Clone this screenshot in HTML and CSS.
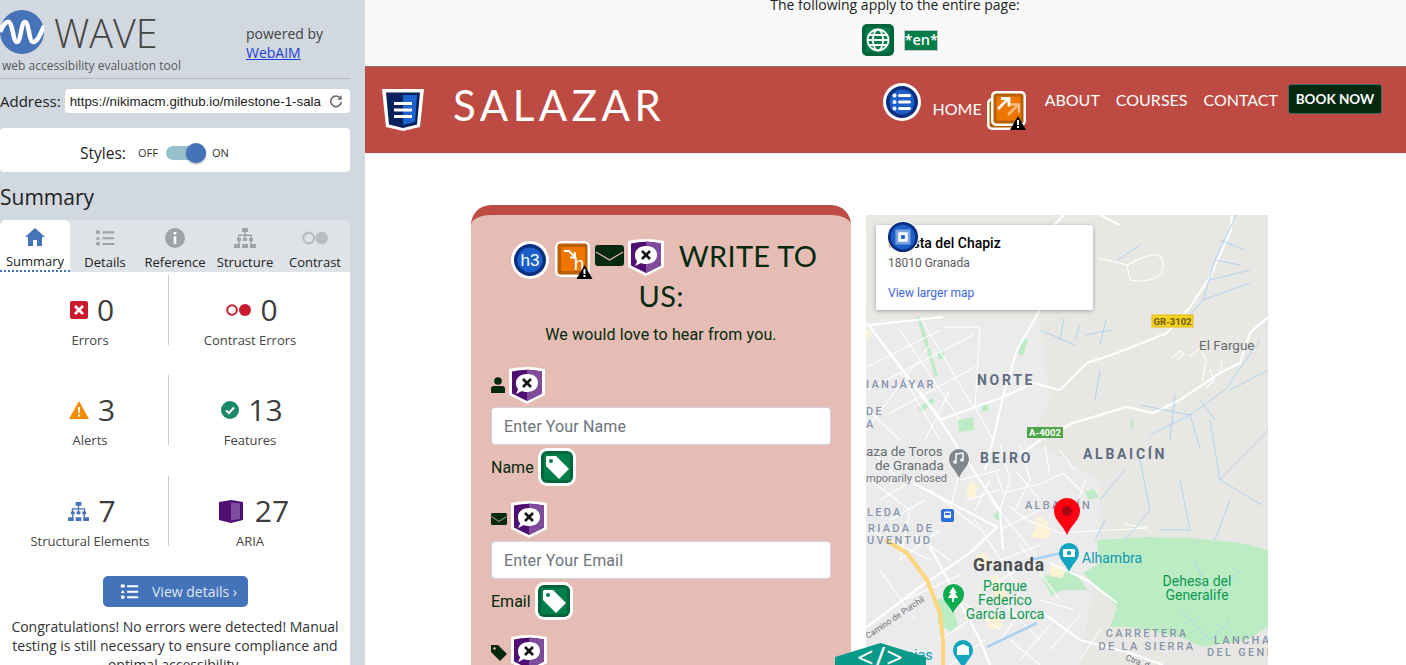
FILE: index.html
```html
<!DOCTYPE html>
<html lang="en">
<head>
    <meta charset="UTF-8">
    <title>WAVE - Salazar</title>
    <link rel="stylesheet" href="styles.css">
</head>
<body>
    <svg class="defs" width="0" height="0">
        <symbol id="i-alert" viewBox="0 0 16 14"><path d="M8 0L16 14H0Z" fill="#000"/><path d="M7 4h2v5H7zM7 10h2v2H7z" fill="#fff"/></symbol>
        <symbol id="i-aria" viewBox="0 0 38 38">
            <path d="M1 3Q19-1 37 3V29L19 38 1 29Z" fill="#fff"/>
            <path d="M4 5.500Q19 2 34 5.500V27.500L19 35 4 27.500Z" fill="#4f0f72"/>
            <path d="M19 3.500Q27 4 34 5.500V27.500L19 35Z" fill="#7f4c9c"/>
            <path d="M19 8C27 8 30 12 30 17S26 26 19 26C17 26 15 25.600 14 25L8 28C9 26 10 24 10 23 8 21 8 19 8 17 8 12 12 8 19 8Z" fill="#fff"/>
            <path d="M15 13L23 21M23 13L15 21" stroke="#111" stroke-width="2.600"/>
        </symbol>
        <symbol id="i-tag" viewBox="0 0 38 38">
            <rect width="38" height="38" rx="9" fill="#fff"/>
            <rect x="3" y="3" width="32" height="32" rx="6" fill="#00653a"/>
            <rect x="6" y="6" width="26" height="26" fill="#007d48"/>
            <path d="M9 8H18L31 21 21 31 8 18V9Z" fill="#fff"/>
            <circle cx="13" cy="13" r="2" fill="#007d48"/>
        </symbol>
        <symbol id="i-listmark" viewBox="0 0 24 24">
            <path d="M1 3h5v4H1zM9 4h14v2.500H9zM9 11h14v2.500H9zM9 18h14v2.500H9z"/>
            <path d="M3.500 10L6 14H1z"/>
            <circle cx="3.500" cy="19" r="2.400"/>
        </symbol>
    </svg>

    <aside class="wave">
        <div class="brand">
            <svg class="wave-logo" viewBox="0 0 44 44">
                <circle cx="22" cy="22" r="22" fill="#4573b9"/>
                <path d="M0 22C3 14 7 11 9 12 13 14 13 32 17 32 21 32 21 12 25 12 29 12 29 32 33 32 38 32 41 22 44 16" fill="none" stroke="#fff" stroke-width="4.500"/>
            </svg>
            <span class="wave-name">WAVE</span>
            <div class="powered">powered by<br><a href="#">WebAIM</a></div>
        </div>
        <div class="tagline">web accessibility evaluation tool</div>
        <div class="address">
            <label>Address:</label>
            <div class="address-box">
                <span class="address-url">https://nikimacm.github.io/milestone-1-sala</span>
                <svg class="reload" viewBox="0 0 16 16"><path d="M13 5A6 6 0 1 0 14 9" fill="none" stroke="#666" stroke-width="1.800"/><path d="M14.500 1.500V6.500H9.500Z" fill="#666"/></svg>
            </div>
        </div>
        <div class="styles-box">
            <span class="styles-label">Styles:</span>
            <span class="off-on">OFF</span>
            <span class="toggle"><span class="knob"></span></span>
            <span class="off-on">ON</span>
        </div>
        <h2 class="summary-title">Summary</h2>
        <div class="panel">
            <ul class="tabs">
                <li class="tab active">
                    <svg viewBox="0 0 20 20"><path d="M10 1L20 10H17V19H12V13H8V19H3V10H0Z" fill="#4573b9"/></svg>
                    Summary
                </li>
                <li class="tab">
                    <svg viewBox="0 0 24 24" fill="#9ea3a7"><use href="#i-listmark"/></svg>
                    Details
                </li>
                <li class="tab">
                    <svg viewBox="0 0 20 20"><circle cx="10" cy="10" r="10" fill="#9ea3a7"/><path d="M8.700 4h2.600v2.600H8.700zM8.700 8.500h2.600V16H8.700z" fill="#fff"/></svg>
                    Reference
                </li>
                <li class="tab">
                    <svg viewBox="0 0 22 20" fill="#9ea3a7"><path d="M8 0h6v4H8zM10.300 4h1.400v3h-1.400zM4 6.500h14V10h-1.300V8H11.700v2h-1.400V8H5.300v2H4zM3 10h4v3H3zM9 10h4v3H9zM15 10h4v3h-4zM4.300 13h1.400v3H4.300zM16.300 13h1.400v3h-1.400zM0 16h6v4H0zM8 16h6v4H8zM16 16h6v4h-6z"/></svg>
                    Structure
                </li>
                <li class="tab tab-contrast">
                    <svg viewBox="0 0 26 14"><circle cx="6.500" cy="7" r="5.200" fill="none" stroke="#b9bcbf" stroke-width="2"/><circle cx="19" cy="7" r="6" fill="#b9bcbf"/></svg>
                    Contrast
                </li>
            </ul>
            <div class="stats">
                <div class="stat">
                    <div class="stat-top">
                        <svg class="stat-ico" width="18" height="18" viewBox="0 0 18 18"><rect width="18" height="18" rx="2" fill="#cb1a2b"/><path d="M5 5L13 13M13 5L5 13" stroke="#fff" stroke-width="2.600"/></svg>
                        <span class="num">0</span>
                    </div>
                    <div class="stat-label">Errors</div>
                </div>
                <div class="stat">
                    <div class="stat-top">
                        <svg class="stat-ico" width="25" height="12" viewBox="0 0 25 12"><circle cx="6" cy="6" r="4.800" fill="none" stroke="#cb1a2b" stroke-width="2"/><circle cx="19" cy="6" r="6" fill="#cb1a2b"/></svg>
                        <span class="num">0</span>
                    </div>
                    <div class="stat-label">Contrast Errors</div>
                </div>
                <div class="stat">
                    <div class="stat-top">
                        <svg class="stat-ico" width="20" height="18" viewBox="0 0 20 18"><path d="M10 0L20 18H0Z" fill="#f28c00"/><path d="M9 6h2v6H9zM9 13.500h2v2H9z" fill="#fff"/></svg>
                        <span class="num">3</span>
                    </div>
                    <div class="stat-label">Alerts</div>
                </div>
                <div class="stat">
                    <div class="stat-top">
                        <svg class="stat-ico" width="18" height="18" viewBox="0 0 18 18"><circle cx="9" cy="9" r="9" fill="#1b8868"/><path d="M5 9.500L8 12 13 6.500" fill="none" stroke="#fff" stroke-width="2"/></svg>
                        <span class="num">13</span>
                    </div>
                    <div class="stat-label">Features</div>
                </div>
                <div class="stat">
                    <div class="stat-top">
                        <svg class="stat-ico" width="21" height="19" viewBox="0 0 22 20" fill="#4573b9"><path d="M8 0h6v4H8zM10.300 4h1.400v3h-1.400zM4 6.500h14V10h-1.300V8H11.700v2h-1.400V8H5.300v2H4zM3 10h4v3H3zM9 10h4v3H9zM15 10h4v3h-4zM4.300 13h1.400v3H4.300zM16.300 13h1.400v3h-1.400zM0 16h6v4H0zM8 16h6v4H8zM16 16h6v4h-6z"/></svg>
                        <span class="num">7</span>
                    </div>
                    <div class="stat-label">Structural Elements</div>
                </div>
                <div class="stat">
                    <div class="stat-top">
                        <svg class="stat-ico stat-ico-aria" width="24" height="23" viewBox="0 0 24 23"><path d="M0 2L12 0 24 2V20L12 23 0 20Z" fill="#4f0f72"/><path d="M12 2.500L21 3.500V19L12 20.500Z" fill="#7f4c9c"/></svg>
                        <span class="num">27</span>
                    </div>
                    <div class="stat-label">ARIA</div>
                </div>
            </div>
            <a class="view-details" href="#">
                <svg viewBox="0 0 24 24" fill="#fff" width="19" height="19"><use href="#i-listmark"/></svg>
                View details ›
            </a>
            <p class="congrats">Congratulations! No errors were detected! Manual testing is still necessary to ensure compliance and optimal accessibility.</p>
        </div>
    </aside>

    <main class="page">
        <div class="page-notes">
            <div class="notes-text">The following apply to the entire page:</div>
            <div class="notes-icons">
                <svg width="32" height="32" viewBox="0 0 32 32">
                    <rect width="32" height="32" rx="5" fill="#00653a"/>
                    <rect x="4" y="4" width="24" height="24" fill="#007d48"/>
                    <g fill="none" stroke="#fff" stroke-width="1.800"><circle cx="16" cy="16" r="10.500"/><ellipse cx="16" cy="16" rx="5" ry="10.500"/><path d="M5.500 16h21M7 11h18M7 21h18"/></g>
                </svg>
                <span class="lang-tag">*en*</span>
            </div>
        </div>

        <header class="navbar">
            <a class="logo" href="#">
                <svg width="42" height="42" viewBox="0 0 42 42">
                    <path d="M0 0H42L38 38 21 42 4 38Z" fill="#fff"/>
                    <path d="M4 3.500H38L35 35.500 21 39 7 35.500Z" fill="#06215c"/>
                    <path d="M21 6H35L33 33 21 36Z" fill="#1d62cf"/>
                    <path d="M12 13H30V16H12ZM12 19.500H30V22.500H12ZM12 26H30V29H12Z" fill="#fff"/>
                </svg>
                <span class="logo-text">SALAZAR</span>
            </a>
            <ul class="nav-links">
                <li class="nav-home">
                    <svg width="38" height="38" viewBox="0 0 38 38">
                        <circle cx="19" cy="19" r="19" fill="#fff"/>
                        <circle cx="19" cy="19" r="16" fill="#0a2f80"/>
                        <circle cx="19" cy="19" r="12.500" fill="#1c5fc8"/>
                        <g fill="#fff"><circle cx="11.500" cy="12.500" r="2"/><circle cx="11.500" cy="19" r="2"/><circle cx="11.500" cy="25.500" r="2"/><rect x="15" y="11" width="13" height="3" rx="1.500"/><rect x="15" y="17.500" width="13" height="3" rx="1.500"/><rect x="15" y="24" width="13" height="3" rx="1.500"/></g>
                    </svg>
                    <a href="#">HOME</a>
                    <span class="link-ico">
                        <svg width="39" height="39" viewBox="0 0 39 39">
                            <rect x="0" y="7" width="32" height="32" rx="5" fill="#fff"/>
                            <rect x="2.500" y="9.500" width="27" height="27" rx="3" fill="#b85f00"/>
                            <rect x="4" y="0" width="35" height="35" rx="5" fill="#fff"/>
                            <rect x="6.500" y="2.500" width="30" height="30" rx="3" fill="#b85f00"/>
                            <rect x="9.500" y="5.500" width="24" height="24" fill="#ee7500"/>
                            <path d="M19 19L29 9M22 8.500H30V16.500" fill="none" stroke="#f5bd85" stroke-width="2.500" transform="translate(2 5)"/>
                            <path d="M11 18L21 8M14 7.500H22V15.500" fill="none" stroke="#fff" stroke-width="2.800"/>
                            <use href="#i-alert" x="23" y="25" width="16" height="14"/>
                        </svg>
                    </span>
                </li>
                <li class="nav-item"><a href="#">ABOUT</a></li>
                <li class="nav-item"><a href="#">COURSES</a></li>
                <li class="nav-item"><a href="#">CONTACT</a></li>
                <li class="nav-btn"><a href="#">BOOK NOW</a></li>
            </ul>
        </header>

        <section class="contact">
            <form class="card">
                <h3 class="card-title">
                    <div class="title-row">
                        <svg class="wi wi-h3-ico" width="38" height="38" viewBox="0 0 38 38">
                            <circle cx="19" cy="19" r="19" fill="#fff"/>
                            <circle cx="19" cy="19" r="16" fill="#0a2f80"/>
                            <circle cx="19" cy="19" r="12.500" fill="#1c5fc8"/>
                            <text x="19" y="25" text-anchor="middle" class="wi-h3">h3</text>
                        </svg>
                        <svg class="wi wi-h" width="38" height="38" viewBox="0 0 38 38">
                            <rect width="35" height="36" rx="6" fill="#fff"/>
                            <rect x="2.500" y="2.500" width="30" height="31" rx="3" fill="#b85f00"/>
                            <rect x="6" y="6" width="24" height="24" fill="#ee7500"/>
                            <path d="M9 10H14L20 16M20 11V16.500H15" fill="none" stroke="#fff" stroke-width="2"/>
                            <text x="24" y="29" text-anchor="middle" class="wi-hh">h</text>
                            <use href="#i-alert" x="21" y="24" width="17" height="14"/>
                        </svg>
                        <svg class="wi wi-mail" width="29" height="21" viewBox="0 0 29 21">
                            <rect width="29" height="21" rx="3" fill="#04290f"/>
                            <path d="M1 7L14.500 15 28 7" fill="none" stroke="#e5bdb4" stroke-width="1.200"/>
                        </svg>
                        <svg class="wi wi-aria" width="38" height="38"><use href="#i-aria"/></svg>
                        <span>WRITE TO</span>
                    </div>
                    <div class="title-end">US<span class="title-colon">:</span></div>
                </h3>
                <p class="card-lead">We would love to hear from you.</p>

                <div class="field">
                    <div class="field-top">
                        <svg width="14" height="16" viewBox="0 0 14 16" fill="#04290f"><circle cx="7" cy="4" r="3.800"/><path d="M0 16V12Q0 9 3 9H11Q14 9 14 12V16Z"/></svg>
                        <svg width="38" height="38"><use href="#i-aria"/></svg>
                    </div>
                    <input class="field-input" type="text" placeholder="Enter Your Name">
                    <div class="field-label">Name <svg width="38" height="38"><use href="#i-tag"/></svg></div>
                </div>

                <div class="field">
                    <div class="field-top">
                        <svg width="16" height="12" viewBox="0 0 16 12"><rect width="16" height="12" rx="1.500" fill="#04290f"/><path d="M0.500 3.500L8 8.500 15.500 3.500" fill="none" stroke="#e5bdb4" stroke-width=".8"/></svg>
                        <svg width="38" height="38"><use href="#i-aria"/></svg>
                    </div>
                    <input class="field-input" type="text" placeholder="Enter Your Email">
                    <div class="field-label">Email <svg width="38" height="38"><use href="#i-tag"/></svg></div>
                </div>

                <div class="field">
                    <div class="field-top">
                        <svg width="16" height="16" viewBox="0 0 16 16" fill="#04290f"><path d="M0 0H7L16 9 9 16 0 7Z"/><circle cx="3.500" cy="3.500" r="1.200" fill="#e5bdb4"/></svg>
                        <svg width="38" height="38"><use href="#i-aria"/></svg>
                    </div>
                </div>
            </form>

            <div class="map">
                <svg class="map-svg" width="402" height="450" viewBox="866 215 402 450">
                    <rect x="866" y="215" width="402" height="450" fill="#e8e7e4"/>
                    <path d="M866 320H1040L1050 400 1030 440 1100 480 1100 540 1080 665H866Z" fill="#ebebeb"/>

                    <path class="park" d="M1097 540L1147 537 1190 538 1240 543 1268 550V627L1247 640 1203 647 1180 637 1130 627 1110 627 1117 607 1097 587 1083 573 1100 563Z"/>
                    <path class="park" d="M1042 578L1062 568 1075 572 1088 590 1062 590 1052 596ZM937 600L950 597 958 625 950 632 938 622Z"/>
                    <path class="park" d="M917 317l3-1 18 60-3 1ZM938 350h6v9h-6zM918 408l14-10 3 4-14 10ZM958 420l15-3 1 13-15 2ZM982 405h6v6h-6ZM1022 340l6-2-5 18-5-2ZM1130 420h3v8h-3zM1085 492l8-3 6 8-10 3ZM993 516l6-6 5 6-6 5Z"/>
                    <path class="blocks" d="M866 329l6 5-6 6ZM970 480l8 6-4 14-8-4ZM1037 515l10 6 4 12-6 6-14-2 4-8ZM1050 566l10-2 6 6-4 8-12-2ZM990 575l8 2 10 20-8 6-6-10ZM975 555l10-2 6 12-10 6ZM985 618l14-2 4 10-14 4Z"/>

                    <g class="streets">
                        <path d="M867 367L940 330M867 390L973 335M890 413L975 367M883 343L940 417M920 317L973 407M900 330L960 420M943 327H980L975 407 993 440M866 408L900 440M900 372L940 440M930 345L866 430M950 390L925 440"/>
                        <path d="M997 473L1003 493 1043 483 1063 473 1083 493M1010 507L1027 520 1060 533 1147 528 1125 524M1000 445L1010 480 1000 510M1020 445L1030 480 1015 510M1045 445L1050 475M960 480L1000 470M880 500L930 470M870 480L910 510M930 490L980 530M960 470L950 510M1000 530L1040 510M1000 560L1040 545M975 520L1020 590M990 500L1040 560"/>
                        <path d="M900 560L940 530M905 600L960 575M880 570L915 620M910 510L900 560M960 600L1000 630M1000 600L1040 640M1030 600L1000 640M1050 625L1020 660M1080 615L1050 650M1100 630L1080 660M870 530L930 560M940 640L985 610M950 665L985 640"/>
                        <path d="M966 500L1000 490M975 510L990 480M1015 470L1040 500M1060 450L1075 470M1085 480L1075 510M1020 545L1060 600M1040 600L1075 610M1010 640L1040 665M870 450L900 480M890 520L925 500M915 535L950 560M985 590L1025 565"/>
                        <path d="M1128 265C1150 252 1165 250 1163 268 1160 282 1140 282 1130 280L1127 265 1098 258"/>
                        <path d="M1172 358l8-7 4 3-7 6M1190 356l10-8 6 12-4 22M1210 370l4 10-8 8M1222 360l-2 14"/>
                    </g>
                    <g class="roads">
                        <path d="M1232 215L1231 230 1210 277 1190 307 1167 333 1117 353 1087 363 1060 390 1033 383 1003 397 940 420"/>
                        <path d="M1040 310L1017 350 1003 397 993 440 985 470"/>
                        <path d="M1268 317L1250 333 1240 363 1220 373 1180 400 1153 413 1127 407 1073 423 1040 440 1020 455"/>
                        <path d="M867 323L940 420 953 440 1000 510 1003 550"/>
                        <path d="M870 325L943 317"/>
                        <path d="M913 483L997 527M930 547L980 640 990 665"/>
                        <path d="M867 627L920 587 970 553 997 527"/>
                        <path d="M1050 563L1087 580 1117 603M1043 613L1080 640 1130 653 1163 665"/>
                        <path d="M1064 215L1040 240M1100 215L1120 225"/>
                    </g>
                    <g class="streams">
                        <path d="M1236 215L1215 260 1203 300 1190 315M1210 280L1250 270M1203 300L1250 283M1215 260L1240 265M1220 240L1245 250M1100 345L1106 320M1075 340L1080 325M1060 340L1064 318M1085 335L1112 330M1040 330L1075 345M1140 245L1118 260"/>
                        <path d="M1260 340L1225 390 1190 415 1140 405M1190 415L1200 448M1200 400L1215 420M1175 395L1170 440M1100 370L1095 400M1150 435L1190 415M1230 390L1268 370M1210 420L1220 480 1268 430M1220 480L1262 505M1140 460L1150 510 1125 540M1180 480L1190 530 1160 530M1230 500L1215 540M1100 500L1125 470M1095 540L1105 520"/>
                        <path class="river" d="M987 647L1037 623M1030 560L1075 550"/>
                        <path d="M1180 610L1210 640 1230 620M1195 560L1210 600 1240 570"/>
                    </g>
                    <path class="motorway" d="M885 540L907 553 927 580 940 613 943 640V665"/>

                    <text class="m-big" x="977" y="385">NORTE</text>
                    <text class="m-big" x="980" y="463">BEIRO</text>
                    <text class="m-big" x="1083" y="459">ALBAICÍN</text>
                    <text class="m-sm" x="866" y="388">IANJÁYAR</text>
                    <text class="m-sm" x="866" y="415">DE</text>
                    <text class="m-sm" x="866" y="428">A</text>
                    <text class="m-sm" x="1025" y="509">ALBAICÍN</text>
                    <text class="m-sm" x="867" y="516">LEDA</text>
                    <text class="m-sm" x="868" y="532">RIADA DE</text>
                    <text class="m-sm" x="867" y="544">UVENTUD</text>
                    <text class="m-sm m-mid" x="1147" y="637">CARRETERA</text>
                    <text class="m-sm m-mid" x="1147" y="650">DE LA SIERRA</text>
                    <text class="m-sm" x="1214" y="644">LANCHA</text>
                    <text class="m-sm" x="1207" y="656">DEL GENERALIFE</text>
                    <text class="m-place" x="1199" y="350">El Fargue</text>
                    <text class="m-place" x="866" y="456">aza de Toros</text>
                    <text class="m-place" x="875" y="470">de Granada</text>
                    <text class="m-note" x="866" y="482">mporarily closed</text>
                    <text class="m-city" x="973" y="571">Granada</text>
                    <text class="m-teal" x="1082" y="563">Alhambra</text>
                    <text class="m-teal" x="907" y="660">cias</text>
                    <g class="m-green">
                        <text x="1005" y="591">Parque</text>
                        <text x="1005" y="605">Federico</text>
                        <text x="1005" y="619">García Lorca</text>
                        <text x="1197" y="586">Dehesa del</text>
                        <text x="1197" y="600">Generalife</text>
                    </g>
                    <text class="m-tiny" transform="translate(868 639) rotate(-34)">Camino de Purchil</text>
                    <text class="m-tiny" transform="translate(1125 660) rotate(20)">Ctra. de la</text>

                    <rect x="1152" y="315" width="41" height="12" fill="#f7d21e" stroke="#e5bb10"/>
                    <text class="m-shield" x="1172.500" y="325" fill="#6b5a10">GR-3102</text>
                    <rect x="1027" y="427" width="36" height="11" fill="#4fa54a"/>
                    <text class="m-shield" x="1045" y="436" fill="#fff">A-4002</text>

                    <path d="M959 449A10 10 0 0 1 969 459C969 466 962 470 959 478 956 470 949 466 949 459A10 10 0 0 1 959 449Z" fill="#80868b"/>
                    <path d="M956 462V454L963 453V460" fill="none" stroke="#fff" stroke-width="1.500"/><circle cx="955" cy="462" r="1.800" fill="#fff"/><circle cx="962" cy="460" r="1.800" fill="#fff"/>
                    <rect x="941" y="509" width="13" height="13" rx="2" fill="#2a6fe0"/>
                    <rect x="944" y="511.500" width="7" height="6.500" rx="1" fill="#fff"/><rect x="945" y="513" width="5" height="2" fill="#2a6fe0"/>
                    <path d="M1067 498A13 13 0 0 1 1080 511C1080 520 1071 525 1067 535 1063 525 1054 520 1054 511A13 13 0 0 1 1067 498Z" fill="#f01"/>
                    <circle cx="1067" cy="511" r="5" fill="#a30a12"/>
                    <path d="M1069 543A10 10 0 0 1 1079 553C1079 560 1072 564 1069 572 1066 564 1059 560 1059 553A10 10 0 0 1 1069 543Z" fill="#12a5c0"/>
                    <rect x="1063" y="549" width="12" height="8" rx="1" fill="#fff"/><circle cx="1069" cy="553" r="2.200" fill="#12a5c0"/>
                    <path d="M953 584A10.500 10.500 0 0 1 964 595C964 602 956 606 953 613 950 606 943 602 943 595A10.500 10.500 0 0 1 953 584Z" fill="#0fab50"/>
                    <path d="M953 587L957 593H955L958 598H954V602H952V598H948L951 593H949Z" fill="#fff"/>
                    <path d="M963 640A10 10 0 0 1 973 650C973 657 966 661 963 669 960 661 953 657 953 650A10 10 0 0 1 963 640Z" fill="#12a5c0"/>
                    <path d="M957 647L963 644 969 647V655H957Z" fill="#fff"/>
                </svg>

                <div class="map-card">
                    <div class="map-card-name">Cuesta del Chapiz</div>
                    <div class="map-card-addr">18010 Granada</div>
                    <a class="map-card-link" href="#">View larger map</a>
                </div>
                <svg class="map-region" width="32" height="32" viewBox="0 0 34 34">
                    <circle cx="17" cy="17" r="17" fill="#fff"/>
                    <circle cx="17" cy="17" r="16" fill="#0a2f80"/>
                    <circle cx="17" cy="17" r="13" fill="#1c5fc8"/>
                    <rect x="9" y="9" width="16" height="16" fill="#7ba3e0"/>
                    <rect x="12" y="12" width="10" height="10" fill="#fff"/>
                    <rect x="15" y="15" width="4" height="4" fill="#1c5fc8"/>
                </svg>
            </div>
        </section>
        <div class="code-badge">&lt;/&gt;</div>
    </main>
</body>
</html>
```

FILE: styles.css
```css
*{
    box-sizing: border-box;
    padding: 0;
    margin: 0;
}
html,body{
    height: 665px;
    overflow: hidden;
}
body{
    display: flex;
    background: #fff;
    font-family: "Open Sans", sans-serif;
    color: #333;
}
li{
    list-style: none;
}
.defs{
    position: absolute;
}

/* wave sidebar */
.wave{
    flex: 0 0 365px;
    height: 665px;
    padding-right: 15px;
    padding-top: 10px;
    background: #d1d8df;
    overflow: hidden;
}
.brand{
    display: flex;
    height: 44px;
}
.wave-logo{
    width: 44px;
    height: 44px;
    flex: none;
}
.wave-name{
    margin-left: 10px;
    width: 192px;
    font-size: 39.500px;
    font-weight: 300;
    line-height: 46px;
    color: #444;
}
.powered{
    padding-top: 14px;
    font-size: 14px;
    line-height: 19px;
    color: #444;
}
.powered a{
    color: #1d3fd8;
}
.tagline{
    padding: 4px 0 4px 2px;
    font-size: 12px;
    line-height: 16px;
    color: #5a5a5a;
    border-bottom: 1px solid #b4b8bb;
}
.address{
    display: flex;
    align-items: center;
    margin-top: 10px;
    gap: 4px;
}
.address label{
    font-size: 15px;
    color: #222;
}
.address-box{
    flex: 1;
    display: flex;
    align-items: center;
    justify-content: space-between;
    height: 24px;
    padding: 0 7px 0 5px;
    background: #fff;
    border-radius: 4px;
    font-family: "Liberation Sans", sans-serif;
    font-size: 13.300px;
    color: #222;
    overflow: hidden;
}
.address-url{
    white-space: nowrap;
}
.reload{
    flex: none;
    width: 14px;
    height: 14px;
}
.styles-box{
    display: flex;
    align-items: center;
    height: 44px;
    margin-top: 15px;
    padding: 5px 0 0 80px;
    background: #fff;
    border-radius: 4px;
}
.styles-label{
    width: 58px;
    font-size: 15.500px;
    color: #222;
}
.off-on{
    font-size: 11px;
    color: #333;
}
.toggle{
    display: flex;
    justify-content: flex-end;
    align-items: center;
    width: 40px;
    height: 14px;
    margin: 0 6px 0 8px;
    background: #96c0cc;
    border-radius: 7px;
}
.knob{
    width: 20px;
    height: 20px;
    background: #4573b9;
    border-radius: 50%;
    box-shadow: 0 1px 2px rgba(0,0,0,.4);
}
.summary-title{
    margin-top: 10px;
    font-size: 21px;
    font-weight: 400;
    line-height: 30px;
    color: #222;
}
.panel{
    margin-top: 8px;
    background: #fff;
    border-radius: 6px 6px 0 0;
}
.tabs{
    display: flex;
    height: 52px;
    background: #dfe3e7;
    border-radius: 6px 6px 0 0;
}
.tab{
    display: flex;
    flex-direction: column;
    align-items: center;
    justify-content: flex-end;
    width: 70px;
    padding-bottom: 1px;
    font-size: 13px;
    line-height: 18px;
    color: #222;
}
.tab svg{
    height: 20px;
    width: 22px;
    margin-bottom: 5px;
}
.tab-contrast svg{
    width: 27px;
}
.tab.active{
    background: #fff;
    border-radius: 6px 6px 0 0;
    border-bottom: 2px dotted #4573b9;
    padding-bottom: 0;
}
.stats{
    display: grid;
    grid-template-columns: 169px 181px;
    row-gap: 30px;
    padding-top: 3px;
}
.stat{
    height: 70px;
    text-align: center;
}
.stat:nth-child(odd){
    padding-left: 12px;
    border-right: 1px solid #ccc;
}
.stat:nth-child(even){
    padding-right: 19px;
}
.stat:nth-child(n+5){
    margin-top: 1px;
}
.stat-top{
    display: flex;
    justify-content: center;
    align-items: center;
    gap: 9px;
    height: 56px;
    padding: 14px 0 0 4px;
}
.stat-ico-aria{
    margin: 0 3px 0 4px;
}
.num{
    font-size: 30px;
    line-height: 40px;
    color: #3c3c3c;
}
.stat-label{
    font-size: 13px;
    line-height: 18px;
    color: #444;
}
.view-details{
    display: flex;
    align-items: center;
    gap: 13px;
    width: 145px;
    height: 31px;
    margin: 30px 0 0 103px;
    padding-left: 17px;
    background: #4573b9;
    border-radius: 5px;
    font-size: 14px;
    color: #dfe7f3;
    text-decoration: none;
}
.congrats{
    margin-top: 10px;
    font-size: 14px;
    line-height: 19px;
    text-align: center;
    color: #333;
}

/* page under test */
.page{
    position: relative;
    flex: 1;
    height: 665px;
    overflow: hidden;
}
.page-notes{
    display: flow-root;
    height: 66px;
    background: #f9f9f9;
    padding-left: 19px;
    text-align: center;
}
.notes-text{
    margin-top: -4px;
    font-size: 14px;
    line-height: 18px;
    color: #222;
}
.notes-icons{
    display: flex;
    justify-content: center;
    align-items: center;
    gap: 10px;
    margin: 10px 0 0 9px;
}
.lang-tag{
    width: 34px;
    height: 21px;
    background: #007d48;
    border: 1px solid #c4c4c4;
    color: #fff;
    font-size: 14.500px;
    font-weight: 600;
    line-height: 18px;
}
.navbar{
    display: flex;
    justify-content: space-between;
    height: 87px;
    background: #bd4b43;
    border-top: 1px solid #7d7a62;
    padding: 16px 24px 0 17px;
    color: #fff;
}
.logo{
    display: flex;
    gap: 29px;
    height: 42px;
    margin-top: 6px;
    text-decoration: none;
    color: #fff;
}
.logo-text{
    font-family: Lato, sans-serif;
    font-size: 42px;
    font-weight: 400;
    line-height: 32px;
    letter-spacing: 4.500px;
}
.nav-links{
    display: flex;
    align-items: flex-start;
}
.nav-links a{
    color: #fff;
    text-decoration: none;
    font-family: Lato, sans-serif;
    font-size: 16px;
    font-weight: 400;
}
.nav-home{
    display: flex;
    align-items: flex-start;
    margin-right: 19px;
}
.nav-home a{
    margin: 16px 5px 0 12px;
    line-height: 20px;
}
.link-ico{
    margin-top: 8px;
}
.nav-item{
    margin-right: 16px;
    padding-top: 7px;
    line-height: 20px;
}
.nav-item:nth-child(4){
    margin-right: 10px;
}
.nav-links .nav-btn a{
    display: block;
    width: 94px;
    height: 30px;
    margin-top: 1px;
    background: #04290f;
    border: 1px solid #3d6b66;
    border-radius: 3px;
    font-size: 13.500px;
    font-weight: 700;
    line-height: 28px;
    text-align: center;
}

/* contact section */
.contact{
    display: flex;
    align-items: flex-start;
    gap: 15px;
    padding: 52px 0 0 106px;
}
.card{
    width: 380px;
    height: 520px;
    padding: 21px 20px 0;
    background: #e5bdb4;
    border-top: 10px solid #bd4b43;
    border-radius: 20px;
    color: #04290f;
}
.card-title{
    height: 80px;
    font-family: Lato, sans-serif;
    font-size: 29px;
    font-weight: 400;
    line-height: 40px;
    letter-spacing: .3px;
    text-align: center;
}
.title-row{
    display: flex;
    align-items: flex-start;
    justify-content: center;
    height: 40px;
    padding-left: 6px;
}
.title-end{
    height: 40px;
}
.wi{
    flex: none;
}
.wi-h3-ico{
    margin: 5px 6px 0 0;
}
.wi-h{
    margin: 5px 2px 0 0;
}
.wi-mail{
    margin: 9px 3px 0 0;
}
.wi-aria{
    margin: 2px 14px 0 0;
}
.wi-h3{
    font-family: "Liberation Sans", sans-serif;
    font-size: 17px;
    letter-spacing: 0;
    fill: #fff;
}
.wi-hh{
    font-family: "Liberation Sans", sans-serif;
    font-size: 19px;
    letter-spacing: 0;
    fill: #fff;
}
.title-colon{
    letter-spacing: 0;
}
.card-lead{
    margin-top: 7px;
    font-family: Roboto, sans-serif;
    font-size: 16px;
    line-height: 24px;
    letter-spacing: .13px;
    text-align: center;
}
.field{
    margin-top: 19px;
    height: 115px;
}
.field-top{
    display: flex;
    align-items: center;
    gap: 3px;
    height: 38px;
}
.field-input{
    display: block;
    width: 340px;
    height: 38px;
    margin-top: 3px;
    padding: 0 12px;
    background: #fff;
    border: 1px solid #ced4da;
    border-radius: 4px;
    font-family: Roboto, sans-serif;
    font-size: 16px;
    letter-spacing: .13px;
}
.field-input::placeholder{
    color: #6c757d;
}
.field-label{
    display: flex;
    align-items: center;
    gap: 4px;
    height: 38px;
    margin-top: 3px;
    font-family: Roboto, sans-serif;
    font-size: 16px;
}
.map{
    position: relative;
    width: 402px;
    height: 450px;
    margin-top: 10px;
    overflow: hidden;
}
.map-svg{
    display: block;
}
.park{
    fill: #bcecc4;
}
.blocks{
    fill: #fbf3d3;
}
.roads path{
    fill: none;
    stroke: #fff;
    stroke-width: 2.200;
}
.streets path{
    fill: none;
    stroke: #fff;
    stroke-width: 1.100;
}
.streams path{
    fill: none;
    stroke: #a9d0f2;
    stroke-width: .9;
}
.streams .river{
    stroke-width: 2.500;
}
.motorway{
    fill: none;
    stroke: #fdd67d;
    stroke-width: 4;
}
.map-svg text{
    font-family: Roboto, sans-serif;
}
.map-svg .m-big{
    font-size: 14px;
    font-weight: 700;
    letter-spacing: 2.700px;
    fill: #5f6d80;
}
.map-svg .m-sm{
    font-size: 11px;
    font-weight: 500;
    letter-spacing: 2.300px;
    fill: #8795ab;
}
.map-svg .m-mid{
    text-anchor: middle;
}
.map-svg .m-place{
    font-size: 13.500px;
    fill: #666b70;
}
.map-svg .m-note{
    font-size: 11px;
    fill: #70757a;
}
.map-svg .m-city{
    font-size: 17.500px;
    font-weight: 700;
    letter-spacing: .9px;
    fill: #4a4d52;
}
.map-svg .m-teal{
    font-size: 14px;
    fill: #0a9ab0;
}
.map-svg .m-green text{
    font-size: 14px;
    text-anchor: middle;
    fill: #0b9a50;
}
.map-svg .m-tiny{
    font-size: 8.500px;
    fill: #70757a;
}
.map-svg .m-shield{
    font-size: 9.500px;
    font-weight: 700;
    text-anchor: middle;
}
.map-card{
    position: absolute;
    top: 10px;
    left: 10px;
    width: 217px;
    height: 85px;
    padding: 9px 12px;
    background: #fff;
    border-radius: 2px;
    box-shadow: 0 1px 4px rgba(0,0,0,.3);
    font-family: Roboto, sans-serif;
}
.map-card-name{
    font-size: 14px;
    font-weight: 500;
    line-height: 18px;
    color: #000;
}
.map-card-addr{
    margin-top: 2px;
    font-size: 12px;
    line-height: 18px;
    color: #5b5b5b;
}
.map-card-link{
    display: block;
    margin-top: 12px;
    font-size: 12px;
    line-height: 18px;
    color: #3a66e0;
    text-decoration: none;
}
.map-region{
    position: absolute;
    top: 6px;
    left: 21px;
}
.code-badge{
    position: absolute;
    left: 470px;
    top: 643px;
    width: 91px;
    height: 40px;
    background: #0a9a8a;
    clip-path: polygon(0 35%, 50% 0, 100% 35%, 100% 100%, 0 100%);
    color: #fff;
    font-family: "Open Sans", sans-serif;
    font-size: 29px;
    font-weight: 400;
    line-height: 28px;
    letter-spacing: 1px;
    text-align: center;
}
```
